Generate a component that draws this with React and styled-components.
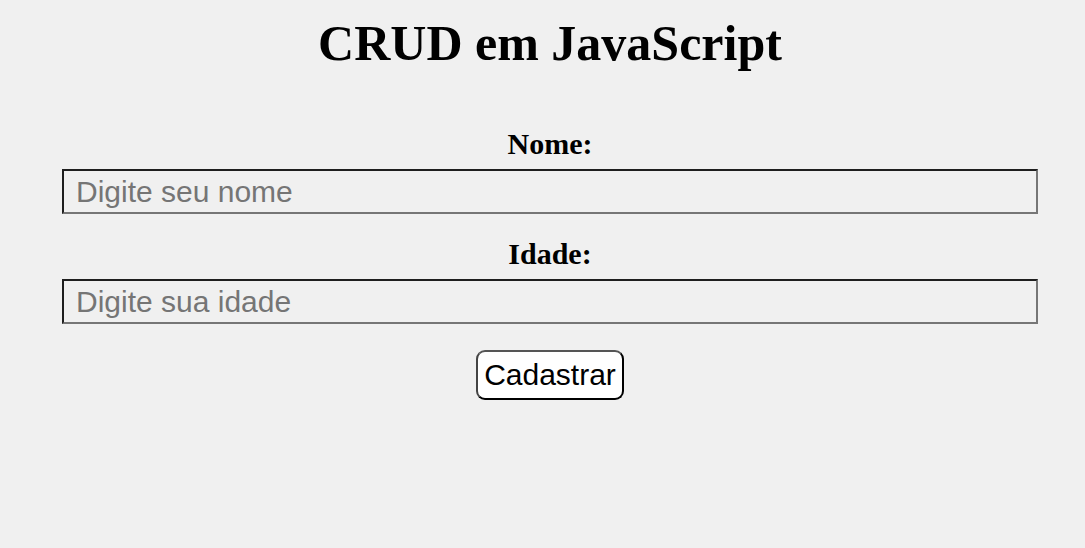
import React from "react";
import styled, { createGlobalStyle } from "styled-components";

const Global = createGlobalStyle`
  html, body { margin: 0; padding: 0; background: #f0f0f0; }
  body { font-family: "Liberation Serif", "Times New Roman", serif; color: #000; }
`;

const Page = styled.main`
  display: flex;
  flex-direction: column;
  align-items: stretch;
  padding: 15px 47px 0 62px;
`;

const Title = styled.h1`
  margin: 0 0 56px;
  font-size: 50px;
  line-height: 56px;
  font-weight: bold;
  text-align: center;
`;

const Form = styled.form`
  display: flex;
  flex-direction: column;
  align-items: center;
`;

const Field = styled.div`
  display: flex;
  flex-direction: column;
  align-items: center;
  width: 100%;
  margin-bottom: ${(p) => p.$gap}px;
`;

const Label = styled.label`
  font-size: 30px;
  font-weight: bold;
  line-height: 34px;
  margin-bottom: 8px;
`;

const Input = styled.input`
  box-sizing: border-box;
  width: 100%;
  height: 45px;
  margin: 0;
  padding: 0 12px;
  background: transparent;
  border-style: solid;
  border-width: 2px;
  border-color: #1e1e1e #767676 #767676 #1e1e1e;
  font-family: "Liberation Sans", Arial, sans-serif;
  font-size: 30px;
  color: #000;
  outline: none;
  &::placeholder { color: #757575; }
`;

const Button = styled.button`
  box-sizing: border-box;
  height: 50px;
  padding: 0 6px;
  background: #fff;
  border: 2px solid #000;
  border-top-color: #555;
  border-left-color: #444;
  border-radius: 9px;
  font-family: "Liberation Sans", Arial, sans-serif;
  font-size: 30px;
  color: #000;
  cursor: pointer;
`;

export default function App() {
  return (
    <>
      <Global />
      <Page>
        <Title>CRUD em JavaScript</Title>
        <Form onSubmit={(e) => e.preventDefault()}>
          <Field $gap={23}>
            <Label htmlFor="nome">Nome:</Label>
            <Input id="nome" type="text" placeholder="Digite seu nome" />
          </Field>
          <Field $gap={26}>
            <Label htmlFor="idade">Idade:</Label>
            <Input id="idade" type="number" placeholder="Digite sua idade" />
          </Field>
          <Button type="submit">Cadastrar</Button>
        </Form>
      </Page>
    </>
  );
}
